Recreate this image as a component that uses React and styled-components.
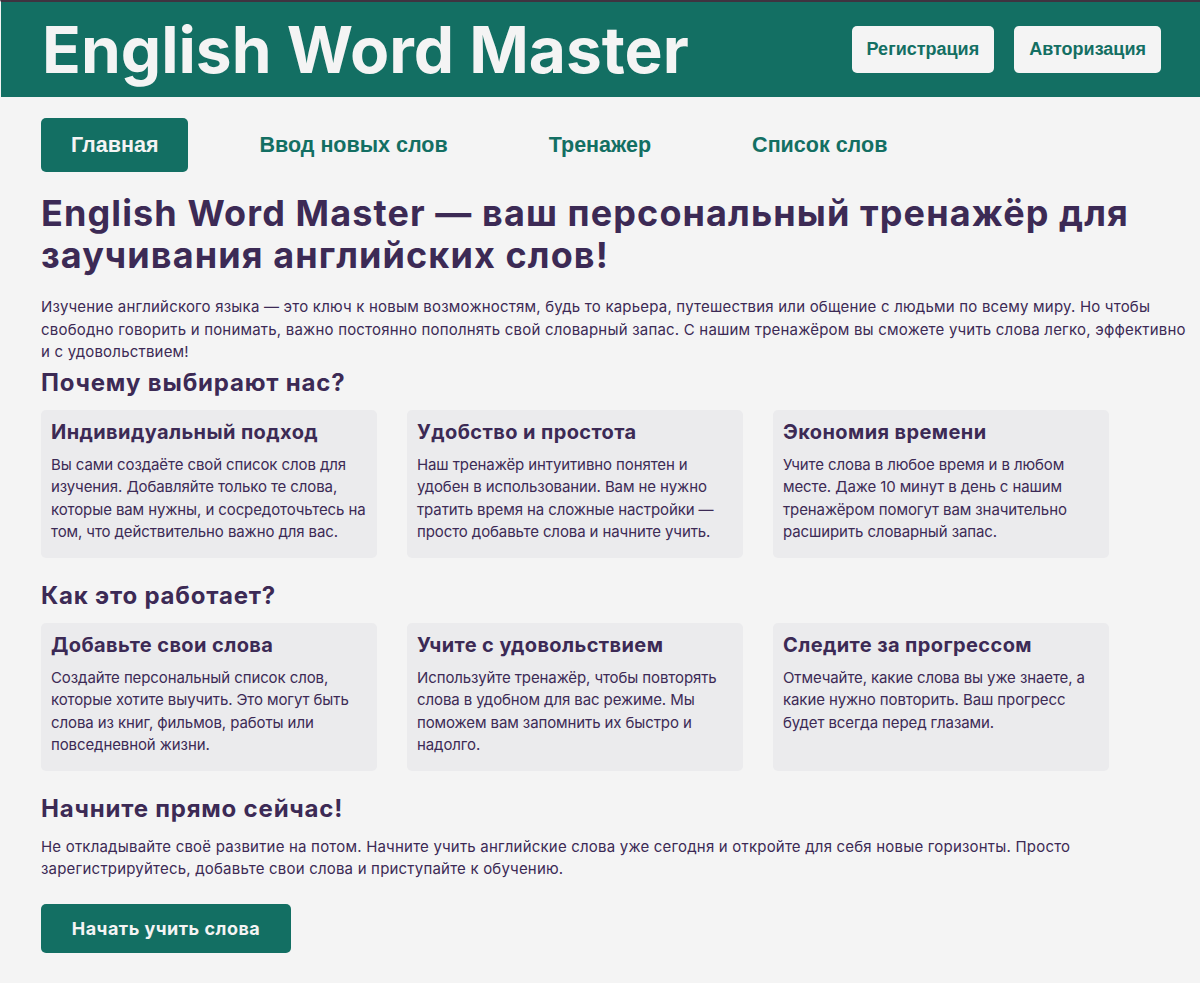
import styled, { createGlobalStyle } from "styled-components";

const GlobalStyle = createGlobalStyle`
  html, body {
    margin: 0;
    padding: 0;
    background-color: #f4f4f4;
  }
  body {
    border-top: 2px solid #3f3340;
    border-left: 1px solid #f4f4f4;
    font-family: Inter, "Noto Sans", sans-serif;
    color: #3c2a55;
  }
  * {
    box-sizing: border-box;
  }
`;

const Header = styled.header`
  display: flex;
  align-items: center;
  justify-content: space-between;
  height: 95px;
  padding: 0 39px 0 41px;
  background-color: #136f63;
`;

const Logo = styled.h1`
  margin: 0;
  font-size: 64px;
  font-weight: 700;
  color: #f4f4f4;
`;

const AuthBox = styled.div`
  display: flex;
  gap: 20px;
`;

const AuthButton = styled.button`
  height: 47px;
  padding: 0 15px;
  border: none;
  border-radius: 5px;
  background-color: #f4f4f4;
  color: #136f63;
  font-family: "Liberation Sans", Arial, sans-serif;
  font-size: 18px;
  font-weight: 700;
`;

const Nav = styled.nav`
  display: flex;
  gap: 41px;
  padding: 21px 0 0 40px;
`;

const NavItem = styled.a`
  display: flex;
  align-items: center;
  height: 54px;
  padding: 0 30px;
  border-radius: 5px;
  background-color: ${({ $active }) => ($active ? "#136f63" : "transparent")};
  color: ${({ $active }) => ($active ? "#f4f4f4" : "#136f63")};
  font-family: "Liberation Sans", Arial, sans-serif;
  font-size: 21.5px;
  font-weight: 700;
  cursor: pointer;
`;

const Main = styled.main`
  padding: 20px 12px 30px 40px;
`;

const Title = styled.h2`
  margin: 0 0 20px;
  font-size: 36px;
  font-weight: 700;
  line-height: 42px;
  letter-spacing: 1.1px;
`;

const Text = styled.p`
  margin: 0;
  font-size: 15px;
  line-height: 22.5px;
  letter-spacing: 0.2px;
`;

const SectionTitle = styled.h3`
  margin: ${({ $top }) => $top || "5px"} 0 13px;
  font-size: 24px;
  font-weight: 700;
  line-height: 28px;
  letter-spacing: 0.8px;
`;

const Cards = styled.div`
  display: flex;
  gap: 30px;
`;

const Card = styled.div`
  width: 336px;
  height: 148px;
  padding: 10px 10px;
  border-radius: 5px;
  background-color: #ebebed;
`;

const CardTitle = styled.h4`
  margin: 0 0 10px;
  font-size: 20px;
  font-weight: 700;
  line-height: 24px;
  letter-spacing: 0.4px;
`;

const CardText = styled.p`
  margin: 0;
  font-size: 15px;
  line-height: 22.5px;
  letter-spacing: -0.1px;
`;

const StartButton = styled.button`
  margin-top: 23px;
  width: 250px;
  height: 49px;
  border: none;
  border-radius: 5px;
  background-color: #136f63;
  color: #f4f4f4;
  font-family: Inter, "Noto Sans", sans-serif;
  font-size: 18px;
  font-weight: 700;
  letter-spacing: 0.5px;
`;

const why = [
  {
    title: "Индивидуальный подход",
    text: "Вы сами создаёте свой список слов для изучения. Добавляйте только те слова, которые вам нужны, и сосредоточьтесь на том, что действительно важно для вас.",
  },
  {
    title: "Удобство и простота",
    text: "Наш тренажёр интуитивно понятен и удобен в использовании. Вам не нужно тратить время на сложные настройки — просто добавьте слова и начните учить.",
  },
  {
    title: "Экономия времени",
    text: "Учите слова в любое время и в любом месте. Даже 10 минут в день с нашим тренажёром помогут вам значительно расширить словарный запас.",
  },
];

const how = [
  {
    title: "Добавьте свои слова",
    text: "Создайте персональный список слов, которые хотите выучить. Это могут быть слова из книг, фильмов, работы или повседневной жизни.",
  },
  {
    title: "Учите с удовольствием",
    text: "Используйте тренажёр, чтобы повторять слова в удобном для вас режиме. Мы поможем вам запомнить их быстро и надолго.",
  },
  {
    title: "Следите за прогрессом",
    text: "Отмечайте, какие слова вы уже знаете, а какие нужно повторить. Ваш прогресс будет всегда перед глазами.",
  },
];

const nav = ["Главная", "Ввод новых слов", "Тренажер", "Список слов"];

const CardList = ({ items }) => (
  <Cards>
    {items.map((item) => (
      <Card key={item.title}>
        <CardTitle>{item.title}</CardTitle>
        <CardText>{item.text}</CardText>
      </Card>
    ))}
  </Cards>
);

const App = () => {
  return (
    <>
      <GlobalStyle />
      <Header>
        <Logo>English Word Master</Logo>
        <AuthBox>
          <AuthButton>Регистрация</AuthButton>
          <AuthButton>Авторизация</AuthButton>
        </AuthBox>
      </Header>
      <Nav>
        {nav.map((name, i) => (
          <NavItem key={name} $active={i === 0}>
            {name}
          </NavItem>
        ))}
      </Nav>
      <Main>
        <Title>English Word Master — ваш персональный тренажёр для заучивания английских слов!</Title>
        <Text>
          Изучение английского языка — это ключ к новым возможностям, будь то карьера, путешествия или общение с людьми по всему миру. Но чтобы свободно говорить и понимать, важно постоянно пополнять свой словарный запас. С нашим тренажёром вы сможете учить слова легко, эффективно и с удовольствием!
        </Text>
        <SectionTitle>Почему выбирают нас?</SectionTitle>
        <CardList items={why} />
        <SectionTitle $top="24px">Как это работает?</SectionTitle>
        <CardList items={how} />
        <SectionTitle $top="24px">Начните прямо сейчас!</SectionTitle>
        <Text>
          Не откладывайте своё развитие на потом. Начните учить английские слова уже сегодня и откройте для себя новые горизонты. Просто зарегистрируйтесь, добавьте свои слова и приступайте к обучению.
        </Text>
        <StartButton>Начать учить слова</StartButton>
      </Main>
    </>
  );
};

export default App;
